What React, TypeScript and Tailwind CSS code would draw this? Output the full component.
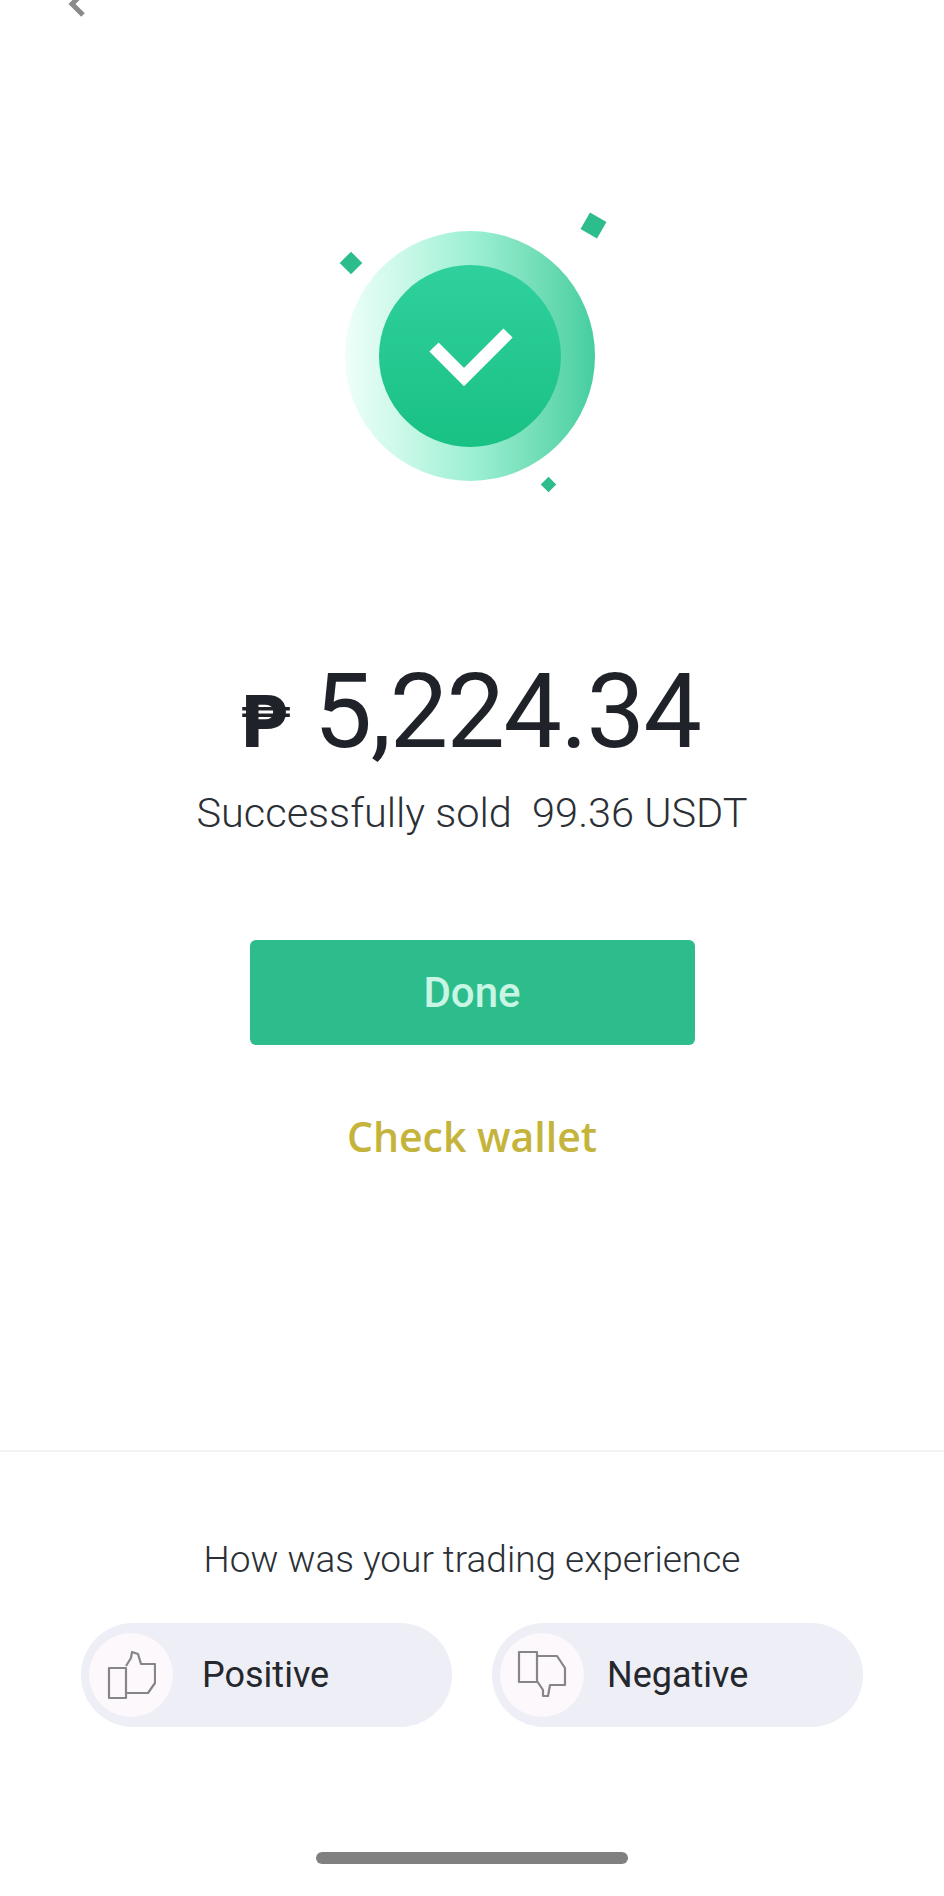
function ThumbUp() {
  return (
    <svg width="50" height="50" viewBox="0 0 50 50" fill="none" stroke="#85858a" strokeWidth="2.2" strokeLinejoin="round">
      <rect x="3" y="18" width="17" height="30" />
      <path d="M20 16 L25 8 L26 2 L32 4 L35 14 L49 14 L49 33 L42 43 L20 43" />
    </svg>
  );
}

function ThumbDown() {
  return (
    <svg width="50" height="50" viewBox="0 0 50 50" fill="none" stroke="#85858a" strokeWidth="2.2" strokeLinejoin="round">
      <rect x="2" y="2" width="18" height="30" />
      <path d="M20 6 L40 6 L48 18 L48 35 L33 35 L31 46 L26 46 L26 40 L20 31" />
    </svg>
  );
}

function VoteButton({ label, icon, gapClass }: { label: string; icon: React.ReactNode; gapClass: string }) {
  return (
    <button type="button" className="flex h-[104px] w-[371px] items-center rounded-full bg-[#eeeef7] pl-2">
      <span className="flex size-[84px] shrink-0 items-center justify-center rounded-full bg-[#fdf8fb]">{icon}</span>
      <span className={`${gapClass} font-['Roboto',sans-serif] text-[36px] text-[#24272c]`}>{label}</span>
    </button>
  );
}

export default function App() {
  return (
    <div className="flex h-[1896px] w-[944px] flex-col items-center bg-white font-['Roboto',sans-serif]">
      <div className="h-[231px] w-full pl-[68px]">
        <svg width="22" height="18" viewBox="0 0 22 18" fill="none" stroke="#8a8a8a" strokeWidth="5">
          <path d="M14 -6 L4 4 L15 15" />
        </svg>
      </div>

      <div className="relative mr-[5px] flex size-[250px] items-center justify-center rounded-full bg-gradient-to-r from-[#eefff9] via-[#9df0d4] to-[#45cea0]">
        <div className="flex size-[182px] items-center justify-center rounded-full bg-gradient-to-b from-[#2fd09d] to-[#18c184]">
          <svg width="92" height="68" viewBox="0 0 92 68" fill="none" stroke="white" strokeWidth="13">
            <path d="M10 25 L40 55 L84 11" />
          </svg>
        </div>
        <span className="absolute left-[-2px] top-[24px] size-[16px] rotate-45 bg-[#2dbd8c]" />
        <span className="absolute right-[-8px] top-[-15px] size-[19px] rotate-[30deg] bg-[#2dbd8c]" />
        <span className="absolute bottom-[-9px] right-[41px] size-[11px] rotate-45 bg-[#2dbd8c]" />
      </div>

      <div className="mr-[4px] mt-[176px] flex items-baseline text-[#1f2329]">
        <span className="font-['DejaVu_Sans',sans-serif] text-[72px] font-bold leading-none">₱</span>
        <span className="ml-[24px] text-[104px] leading-[110px] tracking-[-1.5px]">5,224.34</span>
      </div>
      <p className="mt-[21px] whitespace-pre text-[41.5px] font-light leading-[50px] text-[#2b2f36]">Successfully sold  99.36 USDT</p>

      <button type="button" className="mt-[102px] h-[105px] w-[445px] rounded-md bg-[#2dbd8c] text-[42px] font-medium text-[#c8f5e4]">
        Done
      </button>
      <button type="button" className="mt-[63px] font-['Open_Sans',sans-serif] text-[41px] font-semibold leading-[56px] text-[#c4b43c]">
        Check wallet
      </button>

      <div className="mt-[286px] h-[2px] w-full bg-[#f2f2f2]" />

      <p className="mt-[85px] text-[37px] font-light leading-[46px] text-[#2b2f36]">How was your trading experience</p>

      <div className="mt-[40px] flex gap-[40px]">
        <VoteButton label="Positive" icon={<ThumbUp />} gapClass="ml-[29px]" />
        <VoteButton label="Negative" icon={<ThumbDown />} gapClass="ml-[23px]" />
      </div>

      <div className="mt-[125px] h-[12px] w-[312px] rounded-full bg-[#808080]" />
    </div>
  );
}
